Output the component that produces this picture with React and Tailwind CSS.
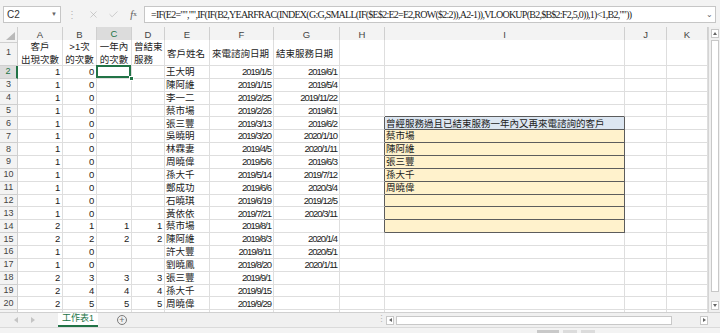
import { X, Check } from "lucide-react";

const COLS =
  "grid grid-cols-[18px_45px_34px_35px_33px_45px_64px_66px_45px_240px_42px_41px]";
const LETTERS = ["A", "B", "C", "D", "E", "F", "G", "H", "I", "J", "K"];
const FONT = "font-['Liberation_Sans','Noto_Sans_CJK_TC',sans-serif]";

const FORMULA =
  '=IF(E2="","",IF(IF(B2,YEARFRAC(INDEX(G:G,SMALL(IF($E$2:E2=E2,ROW($2:2)),A2-1)),VLOOKUP(B2,$B$2:F2,5,0)),1)<1,B2,""))';

const DATA = [
  [1, 0, "", "", "王大明", "2019/1/5", "2019/6/1"],
  [1, 0, "", "", "陳阿維", "2019/1/15", "2019/5/4"],
  [1, 0, "", "", "李一二", "2019/2/25", "2019/11/22"],
  [1, 0, "", "", "蔡市場", "2019/2/26", "2019/6/1"],
  [1, 0, "", "", "張三豐", "2019/3/13", "2019/6/2"],
  [1, 0, "", "", "吳曉明", "2019/3/20", "2020/1/10"],
  [1, 0, "", "", "林霖妻", "2019/4/5", "2020/1/11"],
  [1, 0, "", "", "周曉偉", "2019/5/6", "2019/6/3"],
  [1, 0, "", "", "孫大千", "2019/5/14", "2019/7/12"],
  [1, 0, "", "", "鄭成功", "2019/6/6", "2020/3/4"],
  [1, 0, "", "", "石曉琪", "2019/6/19", "2019/12/5"],
  [1, 0, "", "", "黃依依", "2019/7/21", "2020/3/11"],
  [2, 1, 1, 1, "蔡市場", "2019/8/1", ""],
  [2, 2, 2, 2, "陳阿維", "2019/8/3", "2020/1/4"],
  [1, 0, "", "", "許大豐", "2019/8/11", "2020/5/1"],
  [1, 0, "", "", "劉曉鳳", "2019/8/20", "2020/1/11"],
  [2, 3, 3, 3, "張三豐", "2019/9/1", ""],
  [2, 4, 4, 4, "孫大千", "2019/9/15", ""],
  [2, 5, 5, 5, "周曉偉", "2019/9/29", ""],
  ["", "", "", "", "", "", ""],
];

// the yellow result list in column I
const BOX = {
  6: "曾經服務過且已結束服務一年內又再來電諮詢的客戶",
  7: "蔡市場",
  8: "陳阿維",
  9: "張三豐",
  10: "孫大千",
  11: "周曉偉",
  12: "",
  13: "",
  14: "",
};

const cell = "border-r border-b border-[#dedede] bg-white overflow-hidden whitespace-nowrap";

function ColumnHeader() {
  return (
    <div className={COLS + " h-[13px] bg-[#f3f3f3] text-[9.5px] text-[#444]"}>
      <div className="relative border-r border-b border-[#cfcfcf]">
        <div className="absolute right-[2px] bottom-[2px] w-0 h-0 border-l-[9px] border-l-transparent border-b-[8px] border-b-[#b9b9b9]" />
      </div>
      {LETTERS.map((l) =>
        l === "C" ? (
          <div
            key={l}
            className="flex items-center justify-center bg-[#dcdcdc] border-r border-[#cfcfcf] border-b-2 border-b-[#217346] text-[#217346]"
          >
            {l}
          </div>
        ) : (
          <div key={l} className="flex items-center justify-center border-r border-b border-[#cfcfcf]">
            {l}
          </div>
        )
      )}
    </div>
  );
}

function RowHead({ n }) {
  return n === 2 ? (
    <div className="flex items-center justify-center bg-[#dcdcdc] border-b border-[#cfcfcf] border-r-2 border-r-[#217346] text-[#217346] text-[9px]">
      {n}
    </div>
  ) : (
    <div className="flex items-center justify-center bg-[#f3f3f3] border-r border-b border-[#cfcfcf] text-[#444] text-[9px]">
      {n < 21 ? n : ""}
    </div>
  );
}

function HeaderRow() {
  const two = (a, b, align) => (
    <div className={cell + " flex flex-col justify-center leading-[13px] px-[2px] " + align}>
      <span>{a}</span>
      <span>{b}</span>
    </div>
  );
  return (
    <div className={COLS + " h-[26px] text-[9.5px] text-[#222]"}>
      <RowHead n={1} />
      {two("客戶", "出現次數", "items-center")}
      {two(">1次", "的次數", "items-center")}
      {two("一年內", "的次數", "items-center")}
      {two("曾結束", "服務", "items-start")}
      <div className={cell + " flex items-center pt-[3px] px-[2px]"}>客戶姓名</div>
      <div className={cell + " flex items-center pt-[3px] px-[2px]"}>來電諮詢日期</div>
      <div className={cell + " flex items-center pt-[3px] px-[2px]"}>結束服務日期</div>
      <div className={cell} />
      <div className={cell} />
      <div className={cell} />
      <div className={cell} />
    </div>
  );
}

function DataRow({ n, vals }) {
  const [a, b, c, d, e, f, g] = vals;
  const inBox = BOX[n] !== undefined;
  const num = cell + " flex items-center justify-end px-[2px] tracking-[-0.4px]";
  const date = cell + " flex items-center justify-end px-[2px] tracking-[-1px]";
  let iCell;
  if (n === 5) iCell = <div className="border-r border-[#dedede] border-b border-b-[#5c5c5c] bg-white" />;
  else if (inBox)
    iCell = (
      <div
        className={
          "flex items-center px-[1px] border-r border-b border-[#5c5c5c] overflow-hidden whitespace-nowrap " +
          (n === 6 ? "bg-[#dce6f1]" : "bg-[#fff2cc]")
        }
      >
        {BOX[n]}
      </div>
    );
  else iCell = <div className={cell} />;

  return (
    <div className={COLS + " h-[12.86px] text-[9.5px] leading-none text-[#222]"}>
      <RowHead n={n} />
      <div className={num}>{a}</div>
      <div className={num}>{b}</div>
      {n === 2 ? (
        <div className={cell + " relative overflow-visible"}>
          <div className="absolute -left-px -top-px w-[calc(100%+1px)] h-[calc(100%+1px)] border-2 border-[#217346] z-10" />
          <div className="absolute -right-[3px] -bottom-[3px] w-[5px] h-[5px] bg-[#217346] border border-white z-20" />
        </div>
      ) : (
        <div className={num}>{c}</div>
      )}
      <div className={num}>{d}</div>
      <div className={cell + " flex items-center px-[1px]"}>{e}</div>
      <div className={date}>{f}</div>
      <div className={date}>{g}</div>
      {inBox ? (
        <div className="border-r border-r-[#5c5c5c] border-b border-b-[#dedede] bg-white" />
      ) : (
        <div className={cell} />
      )}
      {iCell}
      <div className={cell} />
      <div className={cell} />
    </div>
  );
}

function VScroll() {
  return (
    <div className="w-[12px] bg-[#f0f0f0] border-l border-[#d4d4d4] flex flex-col items-center pt-[2px] pb-[2px] gap-[2px]">
      <div className="w-[8px] h-[9px] bg-white border border-[#c8c8c8] flex items-center justify-center">
        <div className="w-0 h-0 border-l-[2px] border-r-[2px] border-b-[3px] border-l-transparent border-r-transparent border-b-[#666]" />
      </div>
      <div className="w-[8px] h-[252px] bg-white border border-[#c8c8c8]" />
      <div className="flex-1" />
      <div className="w-[8px] h-[9px] bg-white border border-[#c8c8c8] flex items-center justify-center">
        <div className="w-0 h-0 border-l-[2px] border-r-[2px] border-t-[3px] border-l-transparent border-r-transparent border-t-[#666]" />
      </div>
    </div>
  );
}

export default function App() {
  return (
    <div className={"w-[720px] h-[333px] overflow-hidden bg-[#f3f3f3] flex flex-col " + FONT}>
      {/* formula bar */}
      <div className="h-[27px] flex items-start pt-[6px] pl-[3px] shrink-0">
        <div className="w-[58px] h-[17px] bg-white border border-[#c6c6c6] flex items-center justify-between pl-[3px] pr-[3px]">
          <span className="text-[10px] text-[#333]">C2</span>
          <span className="text-[6px] text-[#666]">▼</span>
        </div>
        <div className="w-[22px] h-[17px] flex items-center justify-center text-[10px] text-[#b5b5b5]">⋮</div>
        <div className="w-[20px] h-[17px] flex items-center justify-center text-[#b0b0b0]">
          <X size={11} strokeWidth={1.3} />
        </div>
        <div className="w-[20px] h-[17px] flex items-center justify-center text-[#b0b0b0]">
          <Check size={11} strokeWidth={1.3} />
        </div>
        <div className="w-[21px] h-[17px] flex items-center justify-center text-[10px] italic text-[#555] font-['Liberation_Serif',serif]">
          f<span className="text-[7px] not-italic">x</span>
        </div>
        <div className="w-[572px] h-[17px] bg-white border border-[#c6c6c6] flex items-center pl-[6px] pr-[2px]">
          <span className="flex-1 text-[10px] text-[#222] whitespace-nowrap overflow-hidden font-['Liberation_Serif',serif] tracking-[-0.75px]">
            {FORMULA}
          </span>
          <span className="text-[8px] text-[#666]">⌄</span>
        </div>
      </div>

      {/* sheet */}
      <div className="h-[285px] flex shrink-0 overflow-hidden">
        <div className="w-[708px] bg-white overflow-hidden">
          <ColumnHeader />
          <HeaderRow />
          {DATA.map((v, i) => (
            <DataRow key={i} n={i + 2} vals={v} />
          ))}
        </div>
        <VScroll />
      </div>

      {/* sheet tabs */}
      <div className="h-[15px] flex items-stretch border-t border-[#d0d0d0] bg-[#f0f0f0] shrink-0">
        <div className="w-[58px] flex items-center gap-[13px] pl-[14px]">
          <div className="w-0 h-0 border-t-[3px] border-b-[3px] border-r-[4px] border-t-transparent border-b-transparent border-r-[#c4c4c4]" />
          <div className="w-0 h-0 border-t-[3px] border-b-[3px] border-l-[4px] border-t-transparent border-b-transparent border-l-[#c4c4c4]" />
        </div>
        <div className="w-[40px] bg-white flex items-center justify-center border-b-2 border-[#217346] text-[9px] text-[#217346]">
          工作表1
        </div>
        <div className="w-[48px] flex items-center justify-center">
          <div className="w-[10px] h-[10px] rounded-full border border-[#7a7a7a] flex items-center justify-center text-[9px] leading-none text-[#6a6a6a]">
            +
          </div>
        </div>
        <div className="flex-1" />
        <div className="w-[10px] flex items-center justify-center text-[9px] text-[#b5b5b5]">⋮</div>
        <div className="flex items-center gap-[2px] pr-[12px]">
          <div className="w-[8px] h-[9px] bg-white border border-[#c8c8c8] flex items-center justify-center">
            <div className="w-0 h-0 border-t-[2px] border-b-[2px] border-r-[3px] border-t-transparent border-b-transparent border-r-[#666]" />
          </div>
          <div className="w-[276px] h-[9px] bg-white border border-[#c8c8c8]" />
          <div className="w-[24px]" />
          <div className="w-[8px] h-[9px] bg-white border border-[#c8c8c8] flex items-center justify-center">
            <div className="w-0 h-0 border-t-[2px] border-b-[2px] border-l-[3px] border-t-transparent border-b-transparent border-l-[#666]" />
          </div>
        </div>
      </div>

      {/* status bar (cut off) */}
      <div className="flex-1 bg-[#f3f3f3] border-t border-[#dadada] flex items-end pl-[537px] gap-[4px]">
        <div className="w-[22px] h-[3px] bg-[#c9c9c9]" />
        <div className="w-[14px] h-[3px] bg-[#dcdcdc]" />
        <div className="w-[14px] h-[3px] bg-[#dcdcdc]" />
      </div>
    </div>
  );
}
